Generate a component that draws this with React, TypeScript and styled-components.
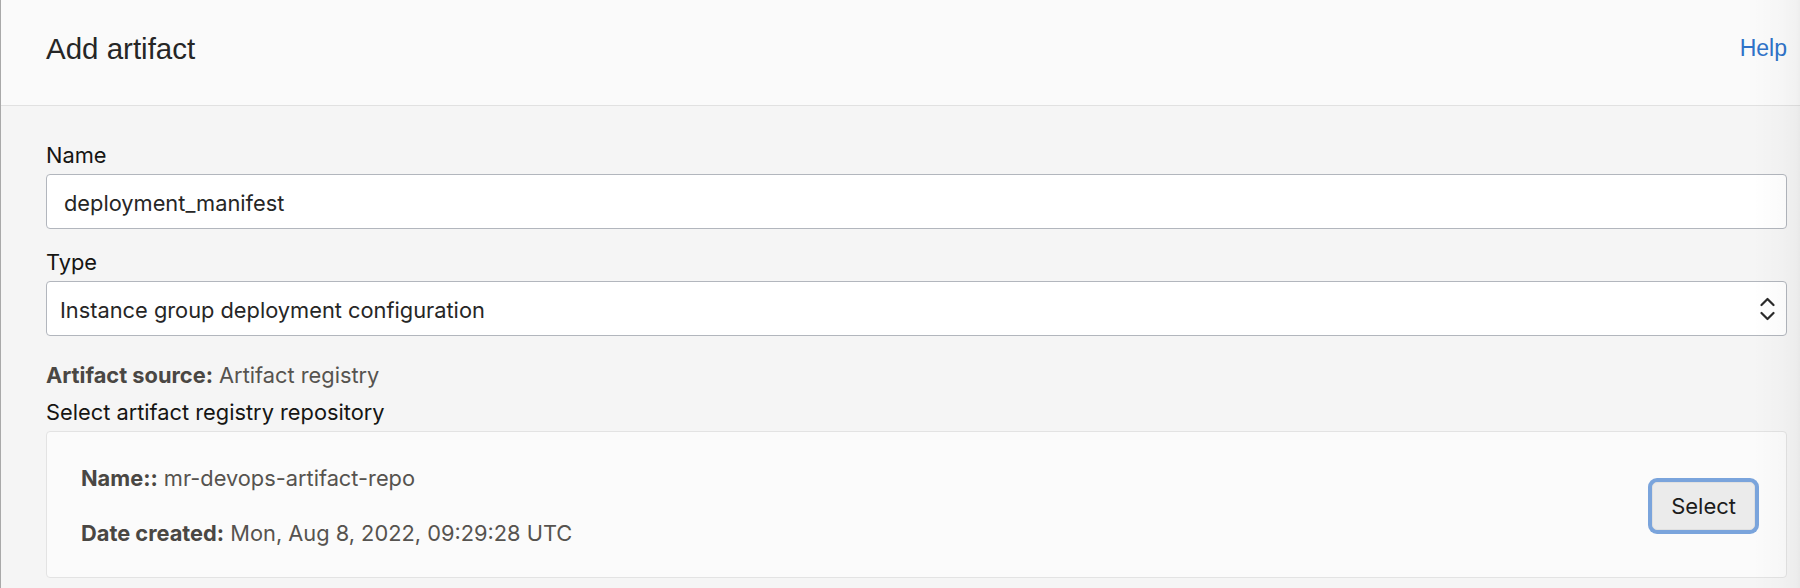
import React from "react";
import styled, { createGlobalStyle } from "styled-components";

const GlobalStyle = createGlobalStyle`
  html, body { margin: 0; padding: 0; background: #f5f5f5; }
  body { font-family: Inter, "Noto Sans", sans-serif; }
  * { box-sizing: border-box; }
`;

const Page = styled.div`
  position: relative;
  width: 1800px;
  height: 588px;
  overflow: hidden;
  background: #f5f5f5;
  border-left: 1px solid #a9a9a9;
  &::after {
    content: "";
    position: absolute;
    top: 0;
    right: 0;
    width: 48px;
    height: 100%;
    pointer-events: none;
    background: linear-gradient(to right, rgba(0,0,0,0) 0%, rgba(0,0,0,0.015) 60%, rgba(0,0,0,0.035) 93%, rgba(0,0,0,0.05) 100%);
  }
`;

const Header = styled.header`
  display: flex;
  justify-content: space-between;
  align-items: flex-start;
  height: 106px;
  padding: 34px 13px 0 45px;
  background: #fafafa;
  border-bottom: 1px solid #e1e1e1;
`;

const Title = styled.h1`
  margin: 0;
  font-family: "Liberation Sans", Arial, sans-serif;
  font-weight: 400;
  font-size: 29.5px;
  line-height: 29px;
  color: #262626;
`;

const HelpLink = styled.a`
  margin-top: 3px;
  font-family: "Liberation Sans", Arial, sans-serif;
  font-size: 23px;
  line-height: 23px;
  color: #2f72c8;
  text-decoration: none;
`;

const Body = styled.main`
  display: flex;
  flex-direction: column;
  padding: 35px 13px 0 45px;
`;

const Field = styled.div<{ $spaceAfter: number }>`
  display: flex;
  flex-direction: column;
  gap: 5px;
  margin-bottom: ${(p) => p.$spaceAfter}px;
`;

const Label = styled.label`
  font-size: 21.8px;
  line-height: 28px;
  color: #161513;
`;

const TextInput = styled.div<{ $padLeft: number }>`
  display: flex;
  align-items: center;
  justify-content: space-between;
  height: 55px;
  padding: 2px 10px 0 ${(p) => p.$padLeft}px;
  background: #ffffff;
  border: 1px solid #b2b6bd;
  border-radius: 4px;
  font-size: 21.8px;
  color: #262626;
`;

const Chevrons = styled.svg`
  flex: none;
  width: 15px;
  height: 24px;
  margin-right: 1px;
  margin-bottom: 1px;
`;

const InfoLine = styled.div<{ $muted?: boolean }>`
  font-size: 21.8px;
  line-height: 37px;
  color: ${(p) => (p.$muted ? "#56534f" : "#161513")};
`;

const Strong = styled.strong`
  font-weight: 700;
  color: #4a4743;
`;

const Card = styled.section`
  display: flex;
  align-items: center;
  justify-content: space-between;
  padding: 32px 31px 30px 34px;
  background: #fbfbfb;
  border: 1px solid #e3e3e3;
  border-radius: 4px;
`;

const CardFields = styled.div`
  display: flex;
  flex-direction: column;
  gap: 27px;
`;

const CardRow = styled.div`
  font-size: 21.8px;
  line-height: 28px;
  color: #56534f;
`;

const Button = styled.button`
  height: 48px;
  padding: 0 18px;
  font-family: Inter, "Noto Sans", sans-serif;
  font-size: 22px;
  color: #1c1c1c;
  background: #ebebeb;
  border: 1px solid #e0e0e0;
  border-radius: 5px;
  box-shadow: 0 0 0 4px #7aa4dc;
  cursor: pointer;
`;

export default function App() {
  return (
    <>
      <GlobalStyle />
      <Page>
        <Header>
          <Title>Add artifact</Title>
          <HelpLink href="#">Help</HelpLink>
        </Header>
        <Body>
          <Field $spaceAfter={19}>
            <Label>Name</Label>
            <TextInput $padLeft={17}>deployment_manifest</TextInput>
          </Field>
          <Field $spaceAfter={21}>
            <Label>Type</Label>
            <TextInput $padLeft={13}>
              <span>Instance group deployment configuration</span>
              <Chevrons viewBox="0 0 15 24" fill="none" stroke="#2a2a2a" strokeWidth="2.2" strokeLinecap="round" strokeLinejoin="round">
                <polyline points="1.5,8 7.5,2 13.5,8" />
                <polyline points="1.5,16 7.5,22 13.5,16" />
              </Chevrons>
            </TextInput>
          </Field>
          <InfoLine $muted>
            <Strong>Artifact source:</Strong> Artifact registry
          </InfoLine>
          <InfoLine>Select artifact registry repository</InfoLine>
          <Card>
            <CardFields>
              <CardRow>
                <Strong>Name::</Strong> mr-devops-artifact-repo
              </CardRow>
              <CardRow>
                <Strong>Date created:</Strong> Mon, Aug 8, 2022, 09:29:28 UTC
              </CardRow>
            </CardFields>
            <Button>Select</Button>
          </Card>
        </Body>
      </Page>
    </>
  );
}
